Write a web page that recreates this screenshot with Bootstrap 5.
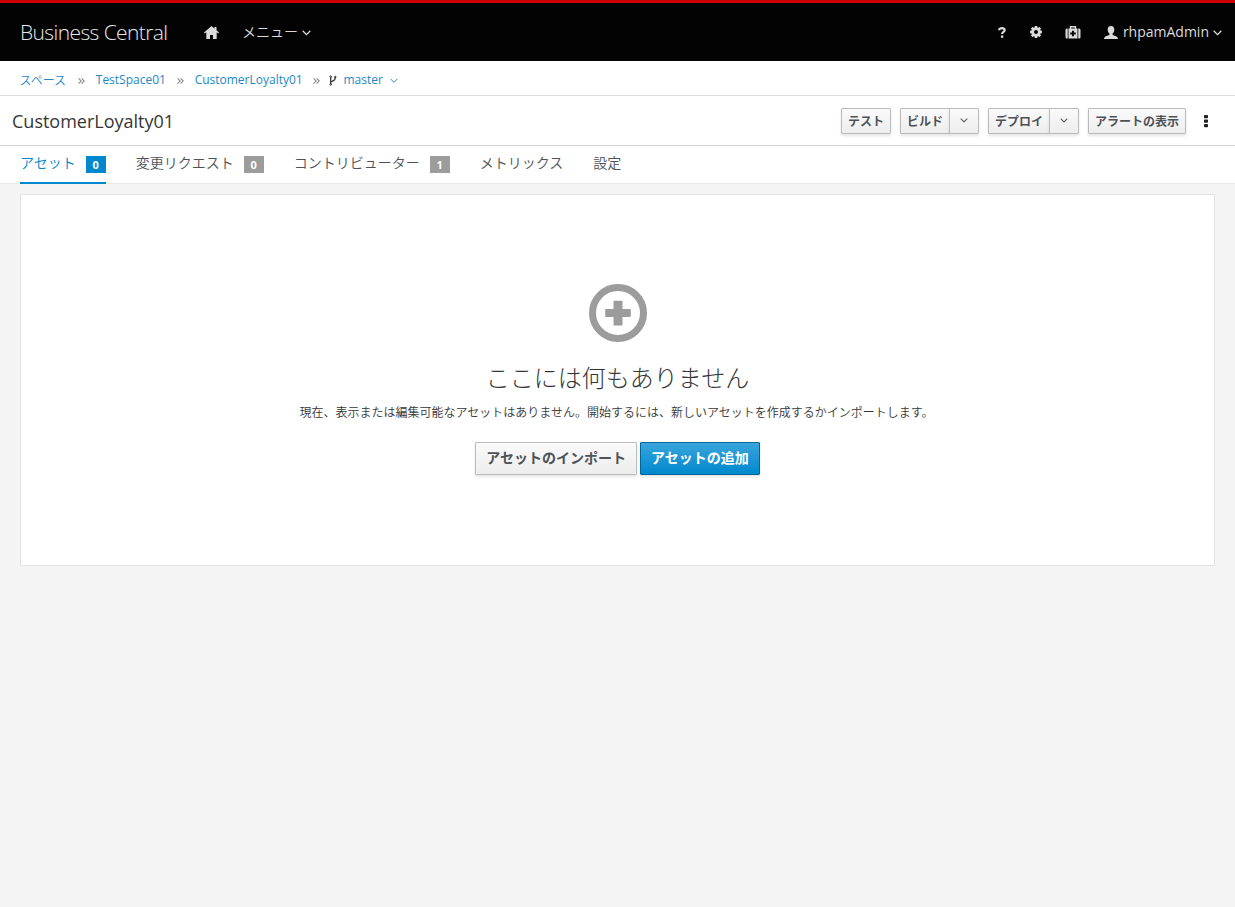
<!DOCTYPE html>
<html lang="ja">
<head>
<meta charset="utf-8">
<meta name="viewport" content="width=device-width, initial-scale=1">
<title>Business Central</title>
<link href="https://cdn.jsdelivr.net/npm/bootstrap@5.3.0/dist/css/bootstrap.min.css" rel="stylesheet">
<style>
body{font-family:"Open Sans","Noto Sans CJK JP",sans-serif;font-size:12px;line-height:20px;color:#363636;background:#f4f4f4;min-height:100vh}
a{text-decoration:none}
svg{display:block;flex:none}
.masthead{height:61px;border-top:3px solid #c00;background:#030303;font-size:14px;color:#dbdbdb;padding:0 13px 0 20px}
.masthead a{color:#dbdbdb}
.masthead .brand{font-size:21px;font-weight:300;letter-spacing:-.6px;width:148px;color:#e8e8e8;white-space:nowrap}
.jp-light{font-family:"Noto Sans CJK JP",sans-serif;font-weight:350}
.masthead .menu-label{margin-top:-2px}
.crumbs{height:35px;border-bottom:1px solid #ddd;padding:4px 20px 0;background:#fff}
.crumbs a{color:#2487c6}
.crumbs .jp-light{margin:-1px 1px 0 -.5px}
.crumbs .sep{width:29px;display:flex;justify-content:center;padding-top:1px;margin-right:-.3px}
.titlebar{height:50px;border-bottom:1px solid #d1d1d1;background:#fff;padding:0 26px 0 12px}
.titlebar h1{font-size:18px;line-height:24px;margin:0;font-weight:400}
.btn-pf{--bs-btn-padding-x:6px;--bs-btn-padding-y:1px;--bs-btn-font-size:12px;--bs-btn-font-weight:600;--bs-btn-line-height:20px;--bs-btn-border-radius:1px;--bs-btn-color:#4d5258;--bs-btn-border-color:#bbb;--bs-btn-hover-border-color:#bbb;background:linear-gradient(#fafafa,#ededed);box-shadow:0 2px 3px rgba(3,3,3,.1);height:26px;white-space:nowrap;font-family:"Noto Sans CJK JP",sans-serif}
.btn-pf.caret-btn{width:30px;display:flex;align-items:center;justify-content:center}
.btn-lg-pf{--bs-btn-padding-x:10px;--bs-btn-font-size:14px;--bs-btn-line-height:20px;height:33px;padding-top:0;padding-bottom:3px}
.btn-blue{--bs-btn-color:#fff;--bs-btn-hover-color:#fff;--bs-btn-border-color:#00659c;--bs-btn-hover-border-color:#00659c;background:linear-gradient(#39a5dc,#0088ce)}
.tabs{height:38px;border-bottom:1px solid #ebebeb;background:#fff;padding:0 20px;gap:30px;font-size:14px}
.tabs a{color:#4d5258;height:38px;padding-top:6px;font-weight:350;font-family:"Noto Sans CJK JP",sans-serif;display:flex}
.tabs a.active{color:#0088ce;border-bottom:2px solid #0088ce}
.tabs .count{font:700 11px/17px "Open Sans",sans-serif;background:#9c9c9c;color:#fff;height:17px;width:20px;text-align:center;margin:4px 0 0 10px}
.tabs .active .count{background:#0088ce}
.blank-slate{margin:10px 20px 0;height:372px;border:1px solid #e4e4e4;background:#fff;padding-top:89px}
.blank-slate h2{font-family:"Noto Sans CJK JP",sans-serif;font-weight:300;font-size:24px;line-height:30px;margin:20px 0 0}
.blank-slate p{font-family:"Noto Sans CJK JP",sans-serif;font-weight:350;line-height:20px;margin:10px 2px 20px 0}
</style>
</head>
<body>
<header class="masthead d-flex align-items-center">
  <span class="brand">Business Central</span>
  <a href="#" style="margin-left:36px" aria-label="Home"><svg width="15" height="13" viewBox="0 0 15 13" fill="#dbdbdb"><path d="M7.500 0 0 6.500l.8.900 1.500-1.100V13H6V9h3v4h3.700V6.300l1.500 1.100.8-.9-2.500-2.200V1h-2v1.600z"/></svg></a>
  <a href="#" class="d-flex align-items-center jp-light" style="margin-left:23px"><span class="menu-label">メニュー</span><svg class="ms-1" style="margin-top:2px" width="9" height="6" viewBox="0 0 9 6" fill="none" stroke="#dbdbdb" stroke-width="1.300"><path d="m.7.8 3.800 3.800L8.300.8"/></svg></a>
  <nav class="d-flex align-items-center ms-auto">
    <a href="#" aria-label="Help"><svg width="8" height="11" viewBox="0 0 8 11"><path d="M1 3.200C1.300 1.700 2.400 1.200 4 1.200c1.700 0 2.700.7 2.700 2 0 1.800-2.600 1.700-2.600 3.800" fill="none" stroke="#dbdbdb" stroke-width="2.200"/><path d="M2.900 8.500h2.400v2.300H2.900z" fill="#dbdbdb"/></svg></a>
    <a href="#" style="margin-left:24px" aria-label="Settings"><svg width="12" height="12" viewBox="-6 -6 12 12"><circle r="3.400" fill="none" stroke="#dbdbdb" stroke-width="2.800"/><g stroke="#dbdbdb" stroke-width="2.700"><path d="M0-6v2M0 6V4M-6 0h2M6 0H4M-4.250-4.250l1.400 1.400M4.250 4.250l-1.400-1.400M-4.250 4.250l1.400-1.400M4.250-4.250l-1.400 1.400"/></g></svg></a>
    <a href="#" style="margin-left:23px" aria-label="Diagnostics"><svg width="16" height="13" viewBox="0 0 16 13"><path d="M5.500 3V.8h5V3" fill="none" stroke="#dbdbdb" stroke-width="1.400"/><path d="M3.500 2.500h9V12.500h-9zM2.700 2.500v10h-.9Q.5 12.500.5 11V4Q.5 2.500 1.800 2.500zM13.300 2.500v10h.9q1.300 0 1.300-1.500V4q0-1.500-1.300-1.500z" fill="#dbdbdb"/><path d="M8 4.700v5.600M5.200 7.500h5.600" stroke="#030303" stroke-width="1.900"/></svg></a>
    <a href="#" class="d-flex align-items-center" style="margin-left:23px"><svg width="14" height="13" viewBox="0 0 14 13" fill="#dbdbdb"><path d="M7 0C4.800 0 3.700 1.400 3.700 3.500c0 1.900.7 3.300 1.800 4.100v1.100C4.500 9.800 0 9.800 0 13h14c0-3.200-4.500-3.200-5.500-4.300V7.600c1.100-.8 1.800-2.200 1.800-4.100C10.300 1.400 9.200 0 7 0z"/></svg><span style="margin-left:5px">rhpamAdmin</span><svg style="margin:2px 0 0 4px" width="9" height="6" viewBox="0 0 9 6" fill="none" stroke="#dbdbdb" stroke-width="1.300"><path d="m.7.8 3.800 3.800L8.300.8"/></svg></a>
  </nav>
</header>
<nav class="crumbs d-flex align-items-center">
  <a href="#" class="jp-light">スペース</a><span class="sep"><svg width="7" height="6" viewBox="0 0 7 6" fill="none" stroke="#8b8b8b" stroke-width="1.100"><path d="m.6.4 2.600 2.600L.6 5.600M3.600.4l2.600 2.600-2.600 2.600"/></svg></span>
  <a href="#">TestSpace01</a><span class="sep"><svg width="7" height="6" viewBox="0 0 7 6" fill="none" stroke="#8b8b8b" stroke-width="1.100"><path d="m.6.4 2.600 2.600L.6 5.600M3.600.4l2.600 2.600-2.600 2.600"/></svg></span>
  <a href="#">CustomerLoyalty01</a><span class="sep" style="width:27px"><svg width="7" height="6" viewBox="0 0 7 6" fill="none" stroke="#8b8b8b" stroke-width="1.100"><path d="m.6.4 2.600 2.600L.6 5.600M3.600.4l2.600 2.600-2.600 2.600"/></svg></span>
  <a href="#" class="d-flex align-items-center"><svg width="8" height="11" viewBox="0 0 8 11" fill="none" stroke="#363636"><path d="M1.700 2v7M6.300 2c0 3-1 3.500-4.600 5" stroke-width="1.300"/><circle cx="1.700" cy="1.600" r=".8"/><circle cx="6.300" cy="2" r=".8"/><circle cx="1.700" cy="9.400" r=".8"/></svg><span style="margin-left:6px">master</span><svg style="margin:1px 0 0 7px" width="8" height="6" viewBox="0 0 8 6" fill="none" stroke="#2487c6"><path d="m.7 1 3.300 3.300L7.300 1"/></svg></a>
</nav>
<section class="titlebar d-flex align-items-center">
  <h1>CustomerLoyalty01</h1>
  <div class="d-flex align-items-center ms-auto" style="gap:9px">
    <button class="btn btn-pf">テスト</button>
    <div class="btn-group"><button class="btn btn-pf">ビルド</button><button class="btn btn-pf caret-btn" aria-label="ビルド"><svg width="8" height="5" viewBox="0 0 8 5" fill="none" stroke="#5b6065" stroke-width="1.100"><path d="m.7.7 3.300 3.300L7.300.7"/></svg></button></div>
    <div class="btn-group"><button class="btn btn-pf">デプロイ</button><button class="btn btn-pf caret-btn" aria-label="デプロイ"><svg width="8" height="5" viewBox="0 0 8 5" fill="none" stroke="#5b6065" stroke-width="1.100"><path d="m.7.7 3.300 3.300L7.300.7"/></svg></button></div>
    <button class="btn btn-pf">アラートの表示</button>
    <svg style="margin-left:8px" width="6" height="14" viewBox="0 0 6 14" fill="#222"><rect x="1" y="1" width="4" height="3.300" rx=".7"/><rect x="1" y="5.500" width="4" height="3.300" rx=".7"/><rect x="1" y="10" width="4" height="3.300" rx=".7"/></svg>
  </div>
</section>
<nav class="tabs d-flex">
  <a href="#" class="active">アセット<span class="count">0</span></a>
  <a href="#">変更リクエスト<span class="count">0</span></a>
  <a href="#">コントリビューター<span class="count">1</span></a>
  <a href="#">メトリックス</a>
  <a href="#">設定</a>
</nav>
<main class="blank-slate text-center">
  <svg class="mx-auto" width="58" height="58" viewBox="0 0 58 58"><circle cx="29" cy="29" r="25.500" fill="none" stroke="#9c9c9c" stroke-width="7"/><path d="M25.300 16.700h7.400q.8 0 .8.800v7.500H41q.8 0 .8.800v6.500q0 .8-.8.800h-7.500v7.600q0 .8-.8.800h-7.400q-.8 0-.8-.8v-7.600H17q-.8 0-.8-.8v-6.500q0-.8.8-.8h7.500v-7.500q0-.8.800-.8z" fill="#9c9c9c"/></svg>
  <h2>ここには何もありません</h2>
  <p>現在、表示または編集可能なアセットはありません。開始するには、新しいアセットを作成するかインポートします。</p>
  <div class="d-flex justify-content-center" style="gap:3px"><button class="btn btn-pf btn-lg-pf">アセットのインポート</button><button class="btn btn-pf btn-lg-pf btn-blue">アセットの追加</button></div>
</main>
<script src="https://cdn.jsdelivr.net/npm/bootstrap@5.3.0/dist/js/bootstrap.bundle.min.js"></script>
</body>
</html>
